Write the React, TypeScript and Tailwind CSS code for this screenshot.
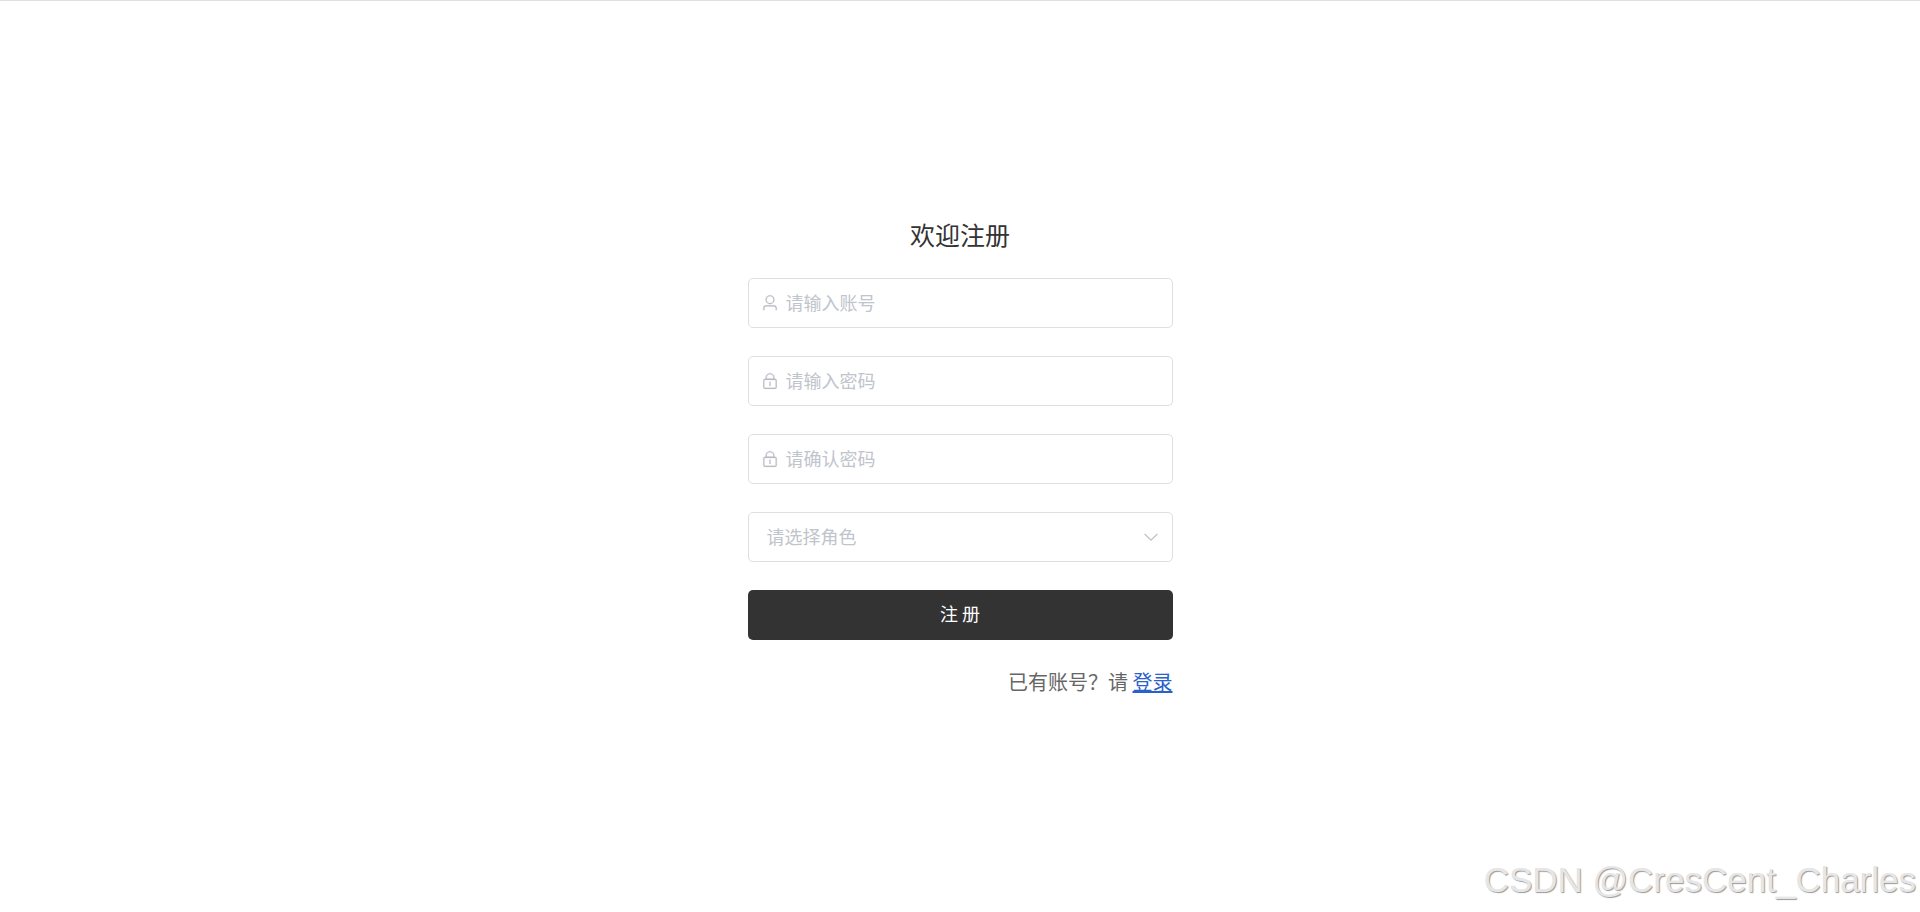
import { useState, type FormEvent, type ReactNode } from "react"

const FIELD = "flex items-center h-[50px] rounded-[5px] border border-[#dcdfe6] bg-white focus-within:border-[#409eff]"
const CONTROL = "flex-1 min-w-0 h-full pb-0.5 bg-transparent text-lg text-[#606266] outline-none placeholder:text-[#c0c4cc]"

const ROLES = [
  { value: "admin", label: "管理员" },
  { value: "user", label: "普通用户" },
]

function UserIcon() {
  return (
    <svg className="w-[18px] h-[18px] shrink-0 text-[#b8bcc5]" viewBox="0 0 1024 1024" fill="currentColor" stroke="currentColor" strokeWidth={10} aria-hidden="true">
      <path d="M512 512a192 192 0 1 0 0-384 192 192 0 0 0 0 384zm0 64a256 256 0 1 1 0-512 256 256 0 0 1 0 512zm320 320v-96a96 96 0 0 0-96-96H288a96 96 0 0 0-96 96v96a32 32 0 1 1-64 0v-96a160 160 0 0 1 160-160h448a160 160 0 0 1 160 160v96a32 32 0 1 1-64 0z" />
    </svg>
  )
}

function LockIcon() {
  return (
    <svg className="w-[18px] h-[18px] shrink-0 text-[#b8bcc5]" viewBox="0 0 1024 1024" fill="currentColor" stroke="currentColor" strokeWidth={10} aria-hidden="true">
      <path d="M224 448a32 32 0 0 0-32 32v384a32 32 0 0 0 32 32h576a32 32 0 0 0 32-32V480a32 32 0 0 0-32-32H224zm0-64h576a96 96 0 0 1 96 96v384a96 96 0 0 1-96 96H224a96 96 0 0 1-96-96V480a96 96 0 0 1 96-96z" />
      <path d="M512 544a32 32 0 0 1 32 32v192a32 32 0 1 1-64 0V576a32 32 0 0 1 32-32zm192-160v-64a192 192 0 1 0-384 0v64h384zM512 64a256 256 0 0 1 256 256v128H256V320A256 256 0 0 1 512 64z" />
    </svg>
  )
}

function ArrowDownIcon() {
  return (
    <svg className="w-[18px] h-[18px] text-[#b8bcc5]" viewBox="0 0 1024 1024" fill="currentColor" stroke="currentColor" strokeWidth={10} aria-hidden="true">
      <path d="M831.872 340.864 512 652.672 192.128 340.864a30.592 30.592 0 0 0-42.752 0 29.12 29.12 0 0 0 0 41.6L489.664 714.24a32 32 0 0 0 44.672 0l340.288-331.712a29.12 29.12 0 0 0 0-41.728 30.592 30.592 0 0 0-42.752 0z" />
    </svg>
  )
}

type InputFieldProps = {
  id: string
  type: string
  placeholder: string
  icon: ReactNode
  value: string
  onChange: (value: string) => void
}

function InputField({ id, type, placeholder, icon, value, onChange }: InputFieldProps) {
  return (
    <div className={`${FIELD} gap-[7px] px-3`}>
      <label htmlFor={id} aria-label={placeholder}>{icon}</label>
      <input
        id={id}
        type={type}
        value={value}
        onChange={(e) => onChange(e.target.value)}
        className={CONTROL}
        placeholder={placeholder}
      />
    </div>
  )
}

export default function App() {
  const [username, setUsername] = useState("")
  const [password, setPassword] = useState("")
  const [confirmPass, setConfirmPass] = useState("")
  const [role, setRole] = useState("")

  function handleSubmit(e: FormEvent) {
    e.preventDefault()
  }

  return (
    <div className="relative min-h-screen flex items-center justify-center border-t border-[#e0e0e0] bg-white font-['Noto_Sans_CJK_SC',sans-serif]">
      <form onSubmit={handleSubmit} className="w-full max-w-[425px] flex flex-col gap-7">
        <h1 className="text-center text-[25px] leading-8 text-[#333333]">欢迎注册</h1>
        <InputField id="username" type="text" placeholder="请输入账号" icon={<UserIcon />} value={username} onChange={setUsername} />
        <InputField id="password" type="password" placeholder="请输入密码" icon={<LockIcon />} value={password} onChange={setPassword} />
        <InputField id="confirm" type="password" placeholder="请确认密码" icon={<LockIcon />} value={confirmPass} onChange={setConfirmPass} />
        <div className={`${FIELD} relative`}>
          <select
            aria-label="请选择角色"
            value={role}
            onChange={(e) => setRole(e.target.value)}
            className={`${CONTROL} appearance-none pl-[18px] pr-10 ${role ? "" : "text-[#c0c4cc]"}`}
          >
            <option value="" disabled>请选择角色</option>
            {ROLES.map((r) => (
              <option key={r.value} value={r.value}>{r.label}</option>
            ))}
          </select>
          <span className="absolute inset-y-0 right-3 flex items-center pointer-events-none">
            <ArrowDownIcon />
          </span>
        </div>
        <button type="submit" className="h-[50px] pb-1 rounded-[5px] bg-[#333333] text-lg text-white cursor-pointer">注 册</button>
        <p className="text-right text-xl leading-7 text-[#666666]">
          已有账号？请 <a href="#/login" className="text-[#2a60c9] underline">登录</a>
        </p>
      </form>
      <div className="absolute right-1 bottom-3 font-['Liberation_Sans',sans-serif] text-[35px] leading-10 text-[#e6e6e6] [text-shadow:1px_1px_1px_#999999] pointer-events-none">
        CSDN @CresCent_Charles
      </div>
    </div>
  )
}
